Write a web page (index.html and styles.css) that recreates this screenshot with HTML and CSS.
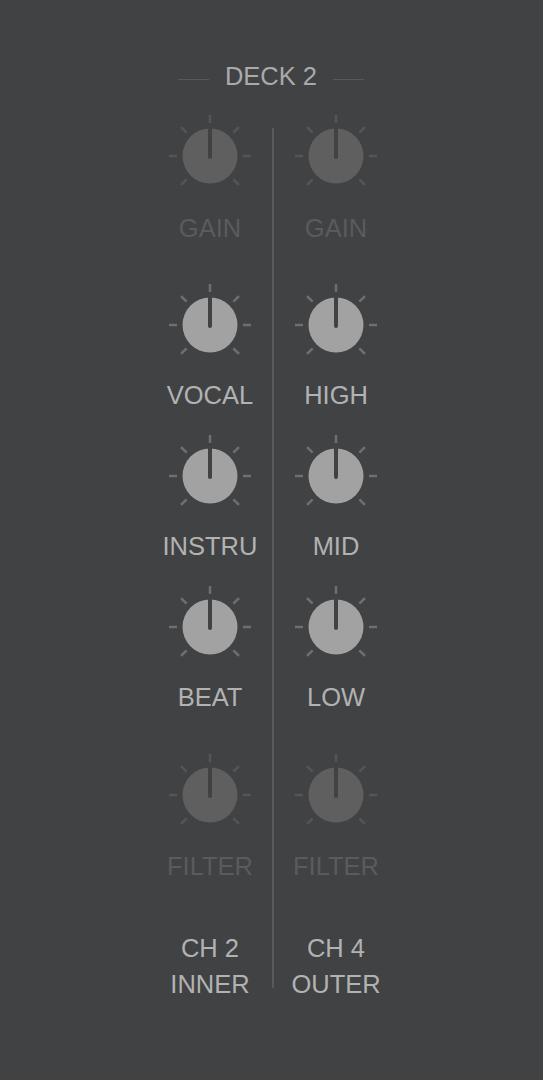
FILE: index.html
```html
<!DOCTYPE html>
<html>
<head>
<meta charset="utf-8">
<link rel="stylesheet" href="styles.css">
</head>
<body>
<div class="page">
  <div class="header">
    <span class="rule"></span>
    <span class="title">DECK 2</span>
    <span class="rule"></span>
  </div>
  <div class="mixer">
    <div class="col">
      <div class="cell dim top">
        <svg class="knob" width="90" height="90" viewBox="0 0 90 90"><g class="ticks"><line x1="45" y1="12" x2="45" y2="4"/><line x1="68.33" y1="21.67" x2="73.99" y2="16.01"/><line x1="78" y1="45" x2="86" y2="45"/><line x1="68.33" y1="68.33" x2="73.99" y2="73.99"/><line x1="21.67" y1="21.67" x2="16.01" y2="16.01"/><line x1="12" y1="45" x2="4" y2="45"/><line x1="21.67" y1="68.33" x2="16.01" y2="73.99"/></g><circle class="body" cx="45" cy="45" r="27.5"/><line class="ptr" x1="45" y1="15" x2="45" y2="46"/></svg>
        <div class="label lab-gain">GAIN</div>
      </div>
      <div class="cell first">
        <svg class="knob" width="90" height="90" viewBox="0 0 90 90"><g class="ticks"><line x1="45" y1="12" x2="45" y2="4"/><line x1="68.33" y1="21.67" x2="73.99" y2="16.01"/><line x1="78" y1="45" x2="86" y2="45"/><line x1="68.33" y1="68.33" x2="73.99" y2="73.99"/><line x1="21.67" y1="21.67" x2="16.01" y2="16.01"/><line x1="12" y1="45" x2="4" y2="45"/><line x1="21.67" y1="68.33" x2="16.01" y2="73.99"/></g><circle class="body" cx="45" cy="45" r="27.5"/><line class="ptr" x1="45" y1="15" x2="45" y2="46"/></svg>
        <div class="label">VOCAL</div>
      </div>
      <div class="cell mid">
        <svg class="knob" width="90" height="90" viewBox="0 0 90 90"><g class="ticks"><line x1="45" y1="12" x2="45" y2="4"/><line x1="68.33" y1="21.67" x2="73.99" y2="16.01"/><line x1="78" y1="45" x2="86" y2="45"/><line x1="68.33" y1="68.33" x2="73.99" y2="73.99"/><line x1="21.67" y1="21.67" x2="16.01" y2="16.01"/><line x1="12" y1="45" x2="4" y2="45"/><line x1="21.67" y1="68.33" x2="16.01" y2="73.99"/></g><circle class="body" cx="45" cy="45" r="27.5"/><line class="ptr" x1="45" y1="15" x2="45" y2="46"/></svg>
        <div class="label">INSTRU</div>
      </div>
      <div class="cell mid">
        <svg class="knob" width="90" height="90" viewBox="0 0 90 90"><g class="ticks"><line x1="45" y1="12" x2="45" y2="4"/><line x1="68.33" y1="21.67" x2="73.99" y2="16.01"/><line x1="78" y1="45" x2="86" y2="45"/><line x1="68.33" y1="68.33" x2="73.99" y2="73.99"/><line x1="21.67" y1="21.67" x2="16.01" y2="16.01"/><line x1="12" y1="45" x2="4" y2="45"/><line x1="21.67" y1="68.33" x2="16.01" y2="73.99"/></g><circle class="body" cx="45" cy="45" r="27.5"/><line class="ptr" x1="45" y1="15" x2="45" y2="46"/></svg>
        <div class="label">BEAT</div>
      </div>
      <div class="cell dim filter">
        <svg class="knob" width="90" height="90" viewBox="0 0 90 90"><g class="ticks"><line x1="45" y1="12" x2="45" y2="4"/><line x1="68.33" y1="21.67" x2="73.99" y2="16.01"/><line x1="78" y1="45" x2="86" y2="45"/><line x1="68.33" y1="68.33" x2="73.99" y2="73.99"/><line x1="21.67" y1="21.67" x2="16.01" y2="16.01"/><line x1="12" y1="45" x2="4" y2="45"/><line x1="21.67" y1="68.33" x2="16.01" y2="73.99"/></g><circle class="body" cx="45" cy="45" r="27.5"/><line class="ptr" x1="45" y1="15" x2="45" y2="46"/></svg>
        <div class="label lab-filter">FILTER</div>
      </div>
      <div class="channel">CH 2<br>INNER</div>
    </div>
    <div class="sep"></div>
    <div class="col">
      <div class="cell dim top">
        <svg class="knob" width="90" height="90" viewBox="0 0 90 90"><g class="ticks"><line x1="45" y1="12" x2="45" y2="4"/><line x1="68.33" y1="21.67" x2="73.99" y2="16.01"/><line x1="78" y1="45" x2="86" y2="45"/><line x1="68.33" y1="68.33" x2="73.99" y2="73.99"/><line x1="21.67" y1="21.67" x2="16.01" y2="16.01"/><line x1="12" y1="45" x2="4" y2="45"/><line x1="21.67" y1="68.33" x2="16.01" y2="73.99"/></g><circle class="body" cx="45" cy="45" r="27.5"/><line class="ptr" x1="45" y1="15" x2="45" y2="46"/></svg>
        <div class="label lab-gain">GAIN</div>
      </div>
      <div class="cell first">
        <svg class="knob" width="90" height="90" viewBox="0 0 90 90"><g class="ticks"><line x1="45" y1="12" x2="45" y2="4"/><line x1="68.33" y1="21.67" x2="73.99" y2="16.01"/><line x1="78" y1="45" x2="86" y2="45"/><line x1="68.33" y1="68.33" x2="73.99" y2="73.99"/><line x1="21.67" y1="21.67" x2="16.01" y2="16.01"/><line x1="12" y1="45" x2="4" y2="45"/><line x1="21.67" y1="68.33" x2="16.01" y2="73.99"/></g><circle class="body" cx="45" cy="45" r="27.5"/><line class="ptr" x1="45" y1="15" x2="45" y2="46"/></svg>
        <div class="label">HIGH</div>
      </div>
      <div class="cell mid">
        <svg class="knob" width="90" height="90" viewBox="0 0 90 90"><g class="ticks"><line x1="45" y1="12" x2="45" y2="4"/><line x1="68.33" y1="21.67" x2="73.99" y2="16.01"/><line x1="78" y1="45" x2="86" y2="45"/><line x1="68.33" y1="68.33" x2="73.99" y2="73.99"/><line x1="21.67" y1="21.67" x2="16.01" y2="16.01"/><line x1="12" y1="45" x2="4" y2="45"/><line x1="21.67" y1="68.33" x2="16.01" y2="73.99"/></g><circle class="body" cx="45" cy="45" r="27.5"/><line class="ptr" x1="45" y1="15" x2="45" y2="46"/></svg>
        <div class="label">MID</div>
      </div>
      <div class="cell mid">
        <svg class="knob" width="90" height="90" viewBox="0 0 90 90"><g class="ticks"><line x1="45" y1="12" x2="45" y2="4"/><line x1="68.33" y1="21.67" x2="73.99" y2="16.01"/><line x1="78" y1="45" x2="86" y2="45"/><line x1="68.33" y1="68.33" x2="73.99" y2="73.99"/><line x1="21.67" y1="21.67" x2="16.01" y2="16.01"/><line x1="12" y1="45" x2="4" y2="45"/><line x1="21.67" y1="68.33" x2="16.01" y2="73.99"/></g><circle class="body" cx="45" cy="45" r="27.5"/><line class="ptr" x1="45" y1="15" x2="45" y2="46"/></svg>
        <div class="label">LOW</div>
      </div>
      <div class="cell dim filter">
        <svg class="knob" width="90" height="90" viewBox="0 0 90 90"><g class="ticks"><line x1="45" y1="12" x2="45" y2="4"/><line x1="68.33" y1="21.67" x2="73.99" y2="16.01"/><line x1="78" y1="45" x2="86" y2="45"/><line x1="68.33" y1="68.33" x2="73.99" y2="73.99"/><line x1="21.67" y1="21.67" x2="16.01" y2="16.01"/><line x1="12" y1="45" x2="4" y2="45"/><line x1="21.67" y1="68.33" x2="16.01" y2="73.99"/></g><circle class="body" cx="45" cy="45" r="27.5"/><line class="ptr" x1="45" y1="15" x2="45" y2="46"/></svg>
        <div class="label lab-filter">FILTER</div>
      </div>
      <div class="channel">CH 4<br>OUTER</div>
    </div>
  </div>
</div>
</body>
</html>
```

FILE: styles.css
```css
html, body {
  margin: 0;
  padding: 0;
  background: #414244;
}
body {
  width: 543px;
  height: 1080px;
  overflow: hidden;
  font-family: "Liberation Sans", Arial, sans-serif;
}
.page {
  padding-top: 61px;
}
.header {
  display: flex;
  justify-content: center;
  align-items: center;
  gap: 16px;
  height: 30px;
  padding-right: 1px;
}
.title {
  font-size: 25.5px;
  line-height: 30px;
  color: #aaaaaa;
}
.rule {
  width: 31px;
  height: 1.5px;
  background: #58595b;
  margin-top: 7px;
}
.mixer {
  display: grid;
  grid-template-columns: 124px 2px 124px;
  margin-left: 148px;
  margin-top: 20px;
}
.sep {
  background: #58595b;
  margin-top: 17px;
  margin-bottom: 14px;
}
.col {
  display: flex;
  flex-direction: column;
  align-items: center;
}
.cell {
  display: flex;
  flex-direction: column;
  align-items: center;
}
.knob {
  display: block;
}
.ticks line {
  stroke: #6e6f71;
  stroke-width: 2.5;
}
.body {
  fill: #a2a2a2;
}
.ptr {
  stroke: #414244;
  stroke-width: 4;
  stroke-linecap: round;
}
.label {
  font-size: 25.5px;
  line-height: 30px;
  color: #b2b2b2;
  margin-top: 9.5px;
  white-space: nowrap;
}
.dim .ticks line {
  stroke: #545557;
}
.dim .body {
  fill: #5f5f60;
}
.dim .label {
  color: #5a5b5d;
}
.lab-gain {
  margin-top: 12px;
}
.lab-filter {
  margin-top: 11px;
}
.first {
  margin-top: 37px;
}
.mid {
  margin-top: 21.5px;
}
.filter {
  margin-top: 38.5px;
}
.channel {
  margin-top: 50px;
  font-size: 25.5px;
  line-height: 35.5px;
  color: #b2b2b2;
  text-align: center;
  white-space: nowrap;
}
```
